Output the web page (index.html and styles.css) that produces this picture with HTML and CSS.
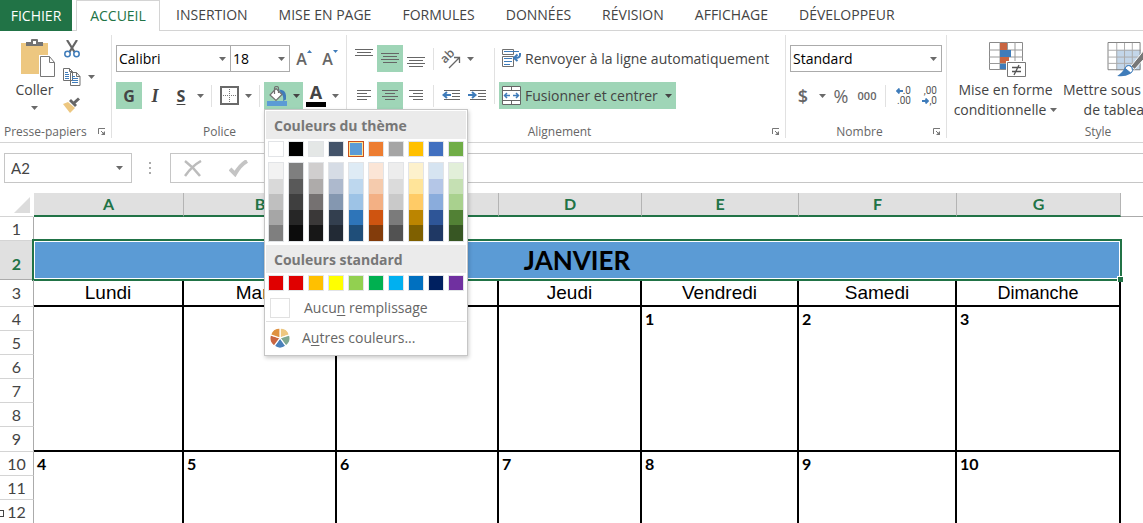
FILE: index.html
```html
<!DOCTYPE html>
<html lang="fr">
<head>
<meta charset="utf-8">
<title>Calendrier</title>
<link rel="stylesheet" href="styles.css">
</head>
<body>
<svg class="defs" aria-hidden="true">
  <symbol id="arrow" viewBox="0 0 7 4"><path d="M0 0h7L3.5 4z" fill="currentColor"/></symbol>
  <symbol id="launch" viewBox="0 0 8 8"><path d="M.5 6V.5H7M3 3l3 3" fill="none" stroke="#777"/><path d="M7 3v4H3z" fill="#777"/></symbol>
</svg>

<nav class="tabs">
  <button class="tab file">FICHIER</button>
  <button class="tab active">ACCUEIL</button>
  <button class="tab">INSERTION</button>
  <button class="tab">MISE EN PAGE</button>
  <button class="tab">FORMULES</button>
  <button class="tab">DONNÉES</button>
  <button class="tab">RÉVISION</button>
  <button class="tab">AFFICHAGE</button>
  <button class="tab">DÉVELOPPEUR</button>
</nav>

<div class="ribbon">
  <section class="group clipboard">
    <div class="clip-body">
      <button class="big paste">
        <svg width="34" height="38" viewBox="0 0 34 38"><path d="M0 4h27v31H0z" fill="#edc780"/><path d="M5 7V3h5V1q0-1 1-1h5q1 0 1 1v2h5v4z" fill="#737373"/><path d="M12 2h3v3h-3z" fill="#fff"/><path d="M18 16h11l6 6v16H18z" fill="#fff"/><path d="M19.500 17.500h9l5 6v14h-14z" fill="#fff" stroke="#777"/><path d="M28.500 17.500v6h5" fill="none" stroke="#777"/></svg>
        <span>Coller</span>
        <svg class="arrow"><use href="#arrow"/></svg>
      </button>
      <div class="clip-tools">
        <button class="tool" aria-label="Couper"><svg width="16" height="18" viewBox="0 0 16 18"><path d="M3 0l7.500 12M13 0L5.500 12" stroke="#666" stroke-width="2.200"/><circle cx="3.500" cy="14" r="2.700" fill="#fff" stroke="#3f7cba" stroke-width="1.500"/><circle cx="12.500" cy="14" r="2.700" fill="#fff" stroke="#3f7cba" stroke-width="1.500"/></svg></button>
        <div class="row"><button class="tool" aria-label="Copier"><svg width="18" height="18" viewBox="0 0 18 18"><path d="M.5.5h6l3 3v9h-9zM7.500 4.500h6l3.500 4v9H7.500z" fill="#fff" stroke="#707070"/><path d="M6.500.5v3h3M13.500 4.500v4H17" fill="none" stroke="#707070"/><path d="M2 4.500h3M2 6.500h4M2 8.500h4M2 10.500h4M9 8.500h3M9 10.500h6M9 12.500h6M9 14.500h6" stroke="#3f7cba"/></svg></button><button class="drop" aria-label="Options de copie"><svg class="arrow"><use href="#arrow"/></svg></button></div>
        <button class="tool" aria-label="Reproduire la mise en forme"><svg width="18" height="16" viewBox="0 0 18 16"><path d="M0 7l5-2 7 6-5 5z" fill="#edc780"/><path d="M6 4l6 6 2-2-6-6z" fill="#666"/><path d="M11 6L16 1.500" stroke="#666" stroke-width="3"/></svg></button>
      </div>
    </div>
    <footer class="caption"><span>Presse-papiers</span><button class="launcher" aria-label="Presse-papiers, options"><svg width="8" height="8"><use href="#launch"/></svg></button></footer>
  </section>

  <section class="group font">
    <div class="rows">
      <div class="row">
        <label class="combo family"><select aria-label="Police"><option>Calibri</option></select><svg class="arrow"><use href="#arrow"/></svg></label>
        <label class="combo size"><select aria-label="Taille"><option>18</option></select><svg class="arrow"><use href="#arrow"/></svg></label>
        <button class="tool grow" aria-label="Augmenter la taille"><span>A</span><svg width="5" height="3" viewBox="0 0 5 3"><path d="M0 3h5L2.500 0z" fill="#3f7cba"/></svg></button>
        <button class="tool shrink" aria-label="Réduire la taille"><span>A</span><svg width="5" height="3" viewBox="0 0 5 3"><path d="M0 0h5L2.500 3z" fill="#3f7cba"/></svg></button>
      </div>
      <div class="row">
        <button class="tool letter on">G</button>
        <button class="tool letter italic">I</button>
        <button class="tool letter underline">S</button>
        <button class="drop" aria-label="Soulignement"><svg class="arrow"><use href="#arrow"/></svg></button>
        <i class="sep"></i>
        <button class="tool" aria-label="Bordures"><svg width="19" height="19" viewBox="0 0 19 19"><path d="M1 1h17v17H1z" fill="#fff" stroke="#6a6a6a" stroke-width="2"/><path d="M9.500 3v13M3 9.500h13" stroke="#777" stroke-dasharray="1 1"/></svg></button>
        <button class="drop" aria-label="Options de bordure"><svg class="arrow"><use href="#arrow"/></svg></button>
        <i class="sep"></i>
        <div class="fill">
          <button class="tool on" aria-label="Couleur de remplissage"><svg width="20" height="20" viewBox="0 0 20 20"><path d="M12 3.500q6.500 0 7 6v4l-3 1.500q1-5-2-8z" fill="#3f7cba"/><path d="M9 2.500l6 6L9 14.500 3 9z" fill="#fff" stroke="#707070" stroke-width="1.200"/><path d="M7.500 8V2q0-1.500 2-1.500t2 1.500v5" fill="none" stroke="#707070" stroke-width="1.200"/><path d="M0 15h20v5H0z" fill="#5b9bd5"/></svg></button><button class="drop wide on" aria-label="Choisir la couleur de remplissage"><svg class="arrow"><use href="#arrow"/></svg></button>
          <div class="menu">
            <h2>Couleurs du thème</h2>
            <div class="swatches theme">
              <button class="c-fff"></button><button class="c-000"></button><button class="c-e7e6e6"></button><button class="c-44546a"></button><button class="c-5b9bd5 chosen"></button><button class="c-ed7d31"></button><button class="c-a5a5a5"></button><button class="c-ffc000"></button><button class="c-4472c4"></button><button class="c-70ad47"></button>
            </div>
            <div class="shades">
              <button class="s1"></button><button class="s2"></button><button class="s3"></button><button class="s4"></button><button class="s5"></button><button class="s6"></button><button class="s7"></button><button class="s8"></button><button class="s9"></button><button class="s10"></button>
            </div>
            <h2>Couleurs standard</h2>
            <div class="swatches">
              <button class="c-red"></button><button class="c-red"></button><button class="c-ffc000"></button><button class="c-yellow"></button><button class="c-lime"></button><button class="c-green"></button><button class="c-sky"></button><button class="c-blue"></button><button class="c-navy"></button><button class="c-purple"></button>
            </div>
            <button class="item none"><i class="blank"></i><span>Aucu<u>n</u> remplissage</span></button>
            <button class="item more"><svg width="20" height="20" viewBox="-10 -10 20 20"><g stroke="#fff" stroke-width="1.200"><path d="M0 0V-10A10 10 0 0 1 9.500-3.100z" fill="#edc780"/><path d="M0 0L9.500-3.100A10 10 0 0 1 5.900 8.100z" fill="#7fa890"/><path d="M0 0L5.900 8.100A10 10 0 0 1-5.900 8.100z" fill="#4a80ba"/><path d="M0 0L-5.900 8.100A10 10 0 0 1-9.500-3.100z" fill="#c96541"/><path d="M0 0L-9.500-3.100A10 10 0 0 1 0-10z" fill="#df9140"/></g></svg><span>A<u>u</u>tres couleurs...</span></button>
          </div>
        </div>
        <button class="tool color" aria-label="Couleur de police"><span>A</span><i></i></button>
        <button class="drop" aria-label="Choisir la couleur de police"><svg class="arrow"><use href="#arrow"/></svg></button>
      </div>
    </div>
    <footer class="caption"><span>Police</span><button class="launcher" aria-label="Police, options"><svg width="8" height="8"><use href="#launch"/></svg></button></footer>
  </section>

  <section class="group align">
    <div class="align-body">
      <div class="rows">
        <div class="row">
          <button class="tool high" aria-label="Aligner en haut"><svg width="18" height="8" viewBox="0 0 18 8"><path d="M0 .5h18M2 3.500h14M0 6.500h18" stroke="#666"/></svg></button>
          <button class="tool on" aria-label="Aligner au centre"><svg width="18" height="11" viewBox="0 0 18 11"><path d="M0 .5h18M2 3.500h14M0 6.500h18M2 9.500h14" stroke="#666"/></svg></button>
          <button class="tool low" aria-label="Aligner en bas"><svg width="18" height="11" viewBox="0 0 18 11"><path d="M0 .5h18M2 3.500h14M0 6.500h18M2 9.500h14" stroke="#666"/></svg></button>
          <i class="sep"></i>
          <button class="tool" aria-label="Orientation"><svg class="orient" width="20" height="20" viewBox="0 0 20 20"><text x="4" y="15" transform="rotate(-45 4 15)">ab</text><path d="M8 19L18 9M13 8.500h5.500V14" fill="none" stroke="#666" stroke-width="1.300"/></svg></button>
          <button class="drop" aria-label="Options d’orientation"><svg class="arrow"><use href="#arrow"/></svg></button>
        </div>
        <div class="row">
          <button class="tool" aria-label="Gauche"><svg width="14" height="11" viewBox="0 0 14 11"><path d="M0 .5h14M0 3.500h10M0 6.500h14M0 9.500h10" stroke="#666"/></svg></button>
          <button class="tool on" aria-label="Centre"><svg width="16" height="11" viewBox="0 0 16 11"><path d="M0 .5h16M3 3.500h10M0 6.500h16M3 9.500h10" stroke="#666"/></svg></button>
          <button class="tool" aria-label="Droite"><svg width="14" height="11" viewBox="0 0 14 11"><path d="M0 .5h14M4 3.500h10M0 6.500h14M4 9.500h10" stroke="#666"/></svg></button>
          <i class="sep"></i>
          <button class="tool" aria-label="Diminuer le retrait"><svg width="18" height="11" viewBox="0 0 18 11"><path d="M2 .5h16M10 3.500h8M10 6.500h8M2 9.500h16" stroke="#666"/><path d="M9 5H2M5 2L1.500 5 5 8" fill="none" stroke="#3f7cba" stroke-width="2"/></svg></button>
          <button class="tool" aria-label="Augmenter le retrait"><svg width="18" height="11" viewBox="0 0 18 11"><path d="M2 .5h16M10 3.500h8M10 6.500h8M2 9.500h16" stroke="#666"/><path d="M0 5h7M4 2l3.500 3L4 8" fill="none" stroke="#3f7cba" stroke-width="2"/></svg></button>
        </div>
      </div>
      <i class="sep tall"></i>
      <div class="rows">
        <button class="wide-btn"><svg width="19" height="19" viewBox="0 0 19 19"><path d="M.5.5h11v5H.5zM.5 7.500h11v10H.5z" fill="#fff" stroke="#707070"/><path d="M2 2.500h15M2 9.500h8M2 12.500h8M2 15.500h6" stroke="#3f7cba"/><path d="M18 4v2q0 3-5 3M15.500 5.500L12 9l3.500 3" fill="none" stroke="#3f7cba" stroke-width="2"/></svg><span>Renvoyer à la ligne automatiquement</span></button>
        <button class="wide-btn on"><svg width="19" height="19" viewBox="0 0 19 19"><path d="M.5.5h18v18H.5zM.5 4.500h18M.5 14.500h18M9.500.5v4M9.500 14.500v4" fill="#fff" stroke="#666"/><path d="M3 9.500h5M11 9.500h5M5 7L2.500 9.500 5 12M14 7l2.500 2.500L14 12" fill="none" stroke="#3f7cba" stroke-width="1.500"/></svg><span>Fusionner et centrer</span><svg class="arrow"><use href="#arrow"/></svg></button>
      </div>
    </div>
    <footer class="caption"><span>Alignement</span><button class="launcher" aria-label="Alignement, options"><svg width="8" height="8"><use href="#launch"/></svg></button></footer>
  </section>

  <section class="group number">
    <div class="rows">
      <div class="row"><label class="combo format"><select aria-label="Format de nombre"><option>Standard</option></select><svg class="arrow"><use href="#arrow"/></svg></label></div>
      <div class="row">
        <button class="tool sign dollar">$</button>
        <button class="drop" aria-label="Devise"><svg class="arrow"><use href="#arrow"/></svg></button>
        <button class="tool sign">%</button>
        <button class="tool zeros">000</button>
        <i class="sep"></i>
        <button class="tool decimals"><span><svg width="7" height="6" viewBox="0 0 7 6"><path d="M7 3H1M3.500 .5L1 3l2.500 2.500" fill="none" stroke="#3f7cba" stroke-width="1.800"/></svg>.0</span><span>.00</span></button>
        <button class="tool decimals"><span>,00</span><span><svg width="7" height="6" viewBox="0 0 7 6"><path d="M0 3h6M3.500 .5L6 3 3.500 5.500" fill="none" stroke="#3f7cba" stroke-width="1.800"/></svg>,0</span></button>
      </div>
    </div>
    <footer class="caption"><span>Nombre</span><button class="launcher" aria-label="Nombre, options"><svg width="8" height="8"><use href="#launch"/></svg></button></footer>
  </section>

  <section class="group style">
    <div class="style-body">
      <button class="big">
        <svg width="37" height="35" viewBox="0 0 37 35"><path d="M.5.5h33v27H.5z" fill="#fff" stroke="#8a8a8a"/><path d="M0 8h34M0 15h34M0 21.500h34M11 0v28M18.500 0v28M26 0v28" stroke="#999"/><path d="M11 1h7v7h-7zM11 15h9v6h-9z" fill="#c96541"/><path d="M11 8h11v7H11zM11 22h6v5h-6z" fill="#3f7cba"/><path d="M17 19h20v16H17z" fill="#fff"/><path d="M18.500 20.500h18v14h-18z" fill="#fff" stroke="#777"/><path d="M23 25.500h9M23 29.500h9M30 23l-5 10" stroke="#555" stroke-width="1.300"/></svg>
        <span>Mise en forme</span><span>conditionnelle <svg class="arrow"><use href="#arrow"/></svg></span>
      </button>
      <button class="big">
        <svg width="37" height="36" viewBox="0 0 37 36"><path d="M1 1h33v28H1z" fill="#fff"/><path d="M9 8h25v21H9z" fill="#c3d6e9"/><path d="M1 8.500h33M1 15.500h33M1 22h33M9.500 1v28M17.500 1v28M25.500 1v28" stroke="#aaa"/><path d="M.5.500h33v28H.5z" fill="none" stroke="#808080"/><path d="M24 25L37 9v9l-9 10z" fill="#777" stroke="#fff"/><path d="M10 35q6-4 8-9 3-4 7-1 3 5-2 8-5 3-13 2z" fill="#3f7cba"/><path d="M18 27q3-5 7-1 2 4-1 6z" fill="#fff" stroke="#3f7cba"/></svg>
        <span>Mettre sous forme</span><span>de tableau <svg class="arrow"><use href="#arrow"/></svg></span>
      </button>
    </div>
    <footer class="caption"><span>Style</span></footer>
  </section>
</div>

<div class="formula">
  <label class="name-box"><input value="A2" aria-label="Zone Nom"><svg class="arrow"><use href="#arrow"/></svg></label>
  <svg class="dots" width="3" height="13" viewBox="0 0 3 13"><path d="M0 0h2v2H0zM0 5h2v2H0zM0 10h2v2H0z" fill="#aaa"/></svg>
  <div class="edit">
    <button aria-label="Annuler"><svg width="18" height="17" viewBox="0 0 18 17"><path d="M1 1q8 6 15 15M17 1Q8 6 1 16" fill="none" stroke="#bcbcbc" stroke-width="2.500"/></svg></button>
    <button aria-label="Entrer"><svg width="19" height="17" viewBox="0 0 19 17"><path d="M1 9l5 5Q11 5 18 1" fill="none" stroke="#c4c4c4" stroke-width="4"/></svg></button>
    <input aria-label="Barre de formule">
  </div>
</div>

<div class="sheet">
  <table>
    <colgroup><col class="w-head"><col class="w-a"><col class="w-b"><col class="w-c"><col class="w-d"><col class="w-e"><col class="w-f"><col class="w-g"><col></colgroup>
    <thead><tr><th class="corner"><svg width="16" height="16" viewBox="0 0 16 16"><path d="M16 0v16H0z" fill="#dcdcdc"/></svg></th><th>A</th><th>B</th><th>C</th><th>D</th><th>E</th><th>F</th><th>G</th><th class="rest"></th></tr></thead>
    <tbody>
      <tr><th>1</th><td colspan="7"></td><td></td></tr>
      <tr class="title"><th>2</th><td colspan="7"><div class="selection">JANVIER<i class="handle"></i></div></td><td></td></tr>
      <tr class="days"><th>3</th><td>Lundi</td><td>Mardi</td><td>Mercredi</td><td>Jeudi</td><td>Vendredi</td><td>Samedi</td><td class="small">Dimanche</td><td></td></tr>
      <tr class="week"><th>4</th><td></td><td></td><td></td><td></td><td>1</td><td>2</td><td>3</td><td></td></tr>
      <tr class="week"><th>5</th><td></td><td></td><td></td><td></td><td></td><td></td><td></td><td></td></tr>
      <tr class="week"><th>6</th><td></td><td></td><td></td><td></td><td></td><td></td><td></td><td></td></tr>
      <tr class="week"><th>7</th><td></td><td></td><td></td><td></td><td></td><td></td><td></td><td></td></tr>
      <tr class="week"><th>8</th><td></td><td></td><td></td><td></td><td></td><td></td><td></td><td></td></tr>
      <tr class="week last"><th>9</th><td></td><td></td><td></td><td></td><td></td><td></td><td></td><td></td></tr>
      <tr class="week"><th>10</th><td>4</td><td>5</td><td>6</td><td>7</td><td>8</td><td>9</td><td>10</td><td></td></tr>
      <tr class="week"><th>11</th><td></td><td></td><td></td><td></td><td></td><td></td><td></td><td></td></tr>
      <tr class="week"><th class="marked">12</th><td></td><td></td><td></td><td></td><td></td><td></td><td></td><td></td></tr>
    </tbody>
  </table>
</div>
</body>
</html>
```

FILE: styles.css
```css
* { box-sizing: border-box; }
html, body { height: 100%; }
body {
  margin: 0;
  overflow: hidden;
  background: #fff;
  color: #444;
  font: 14px/20px "Open Sans", "Noto Sans", sans-serif;
}
button, input, select {
  margin: 0;
  padding: 0;
  border: 0;
  border-radius: 0;
  background: none;
  color: inherit;
  font: inherit;
}
svg { display: block; flex: none; }
.defs { position: absolute; width: 0; height: 0; }
.arrow { width: 7px; height: 4px; color: #6a6a6a; }

/* Tabs */
.tabs {
  display: flex;
  height: 31px;
  border-bottom: 1px solid #d4d4d4;
  white-space: nowrap;
}
.tab { flex: none; height: 30px; margin-right: 31px; }
.tab.file { width: 72px; height: 31px; margin-right: 4px; background: #217346; color: #fff; }
.tab.active {
  width: 84px;
  height: 31px;
  margin-right: 16px;
  border: 1px solid #d4d4d4;
  border-bottom: 0;
  background: #fff;
  color: #217346;
}

/* Ribbon */
.ribbon {
  display: flex;
  height: 112px;
  overflow-x: clip;
  border-bottom: 1px solid #d4d4d4;
  white-space: nowrap;
}
.group {
  display: flex;
  flex: none;
  flex-direction: column;
  justify-content: space-between;
  margin: 4px 0;
  border-right: 1px solid #e1e1e1;
}
.caption {
  display: flex;
  align-items: center;
  height: 12px;
  padding-right: 5px;
  color: #666;
  font-size: 12px;
}
.caption span { flex: 1; text-align: center; }
.launcher { flex: none; }
.rows { display: flex; flex-direction: column; gap: 10px; }
.row { display: flex; height: 27px; }
.tool, .drop {
  display: flex;
  flex: none;
  align-items: center;
  justify-content: center;
  width: 26px;
  height: 27px;
}
.drop { width: 12px; }
.drop.wide { width: 13px; }
.on { background: #9fd5b7; }
.on .arrow { color: #444; }
.sep { width: 1px; height: 22px; margin: 3px 4px 0 5px; background: #e1e1e1; }

.clipboard { width: 112px; }
.clip-body { display: flex; padding-left: 10px; }
.clip-tools { display: flex; flex-direction: column; }
.clip-tools .tool, .clip-tools .drop, .clip-tools .row { height: 28px; }
.clipboard .caption span { text-align: left; padding-left: 4px; }
.big { display: flex; flex-direction: column; align-items: center; }
.big span { display: flex; align-items: center; gap: 4px; }
.paste { width: 49px; padding: 4px 0 0; }
.paste span { margin: 3px 0 6px; }
.paste > svg:first-child { margin-left: 6px; }

.font, .align, .number { padding: 10px 0 0 4px; }
.font .caption, .align .caption, .number .caption { margin-left: -4px; }
.font { width: 235px; }
.font .caption { padding-right: 11px; }
.combo { display: flex; position: relative; align-items: center; height: 27px; border: 1px solid #ababab; }
.combo select {
  width: 100%;
  height: 25px;
  padding-left: 2px;
  appearance: none;
  color: #000;
}
.combo .arrow { position: absolute; right: 4px; pointer-events: none; }
.family { width: 115px; }
.size { width: 60px; margin: 0 1px 0 -1px; }
.grow, .shrink { align-items: center; font-size: 16px; font-weight: 600; color: #666; }
.grow svg, .shrink svg { margin-bottom: 14px; }
.letter { font-size: 16px; font-weight: 700; }
.italic { font-family: "Liberation Serif", serif; font-style: italic; font-size: 18px; }
.underline { text-decoration: underline; text-underline-offset: 2px; }
.color { flex-direction: column; justify-content: flex-start; font-size: 18px; font-weight: 700; }
.color i { width: 20px; height: 5px; background: #000; }
.fill { display: flex; position: relative; }

/* Colour menu */
.menu {
  position: absolute;
  z-index: 5;
  top: 100%;
  left: 0;
  width: 204px;
  padding: 1px;
  border: 1px solid #c6c6c6;
  background: #fff;
  box-shadow: 1px 2px 4px rgba(0, 0, 0, .2);
  color: #666;
}
.menu h2 {
  height: 28px;
  margin: 0;
  padding-left: 8px;
  background: #ebebeb;
  color: #777;
  font-size: 14px;
  line-height: 29px;
}
.swatches, .shades { display: flex; gap: 4px; padding: 2px; }
.swatches button, .shades button { flex: none; width: 16px; height: 16px; border: 1px solid #e2e4e7; }
.shades { padding: 3px 2px; }
.shades button {
  height: 80px;
  background: linear-gradient(var(--a) 20%, var(--b) 20% 40%, var(--c) 40% 60%, var(--d) 60% 80%, var(--e) 80%);
}
.swatches .chosen { border-color: #c8501e; box-shadow: inset 0 0 0 1px #ffe294; }
.c-fff { background: #fff; }
.c-000 { background: #000; }
.c-e7e6e6 { background: #e4e7e6; }
.c-44546a { background: #44546a; }
.c-5b9bd5 { background: #5b9bd5; }
.c-ed7d31 { background: #ed7d31; }
.c-a5a5a5 { background: #a5a5a5; }
.c-ffc000 { background: #ffc000; }
.c-4472c4 { background: #4170c0; }
.c-70ad47 { background: #70ad47; }
.c-red { background: #e00000; }
.c-yellow { background: #ff0; }
.c-lime { background: #92d050; }
.c-green { background: #00b050; }
.c-sky { background: #00b0f0; }
.c-blue { background: #0070c0; }
.c-navy { background: #002060; }
.c-purple { background: #7030a0; }
.s1 { --a: #f2f2f2; --b: #d9d9d9; --c: #bfbfbf; --d: #a6a6a6; --e: #7f7f7f; }
.s2 { --a: #7f7f7f; --b: #595959; --c: #3f3f3f; --d: #262626; --e: #0c0c0c; }
.s3 { --a: #d0cece; --b: #aeabaa; --c: #757171; --d: #3a3838; --e: #171717; }
.s4 { --a: #d6dce5; --b: #adb9cd; --c: #8497b0; --d: #333f4f; --e: #222a35; }
.s5 { --a: #deebf5; --b: #bdd7ee; --c: #9dc3e6; --d: #2e75b9; --e: #1f4e79; }
.s6 { --a: #fbe5d6; --b: #f5cbad; --c: #f3b084; --d: #cf5410; --e: #833c0b; }
.s7 { --a: #ededed; --b: #dbdbdb; --c: #c9c9c9; --d: #7b7b7b; --e: #525252; }
.s8 { --a: #fdf1cc; --b: #ffe499; --c: #ffcb66; --d: #bc8500; --e: #7f6000; }
.s9 { --a: #d6e4f1; --b: #b4c6e7; --c: #8aacdc; --d: #2e5597; --e: #1f3864; }
.s10 { --a: #e2efd9; --b: #c5e0b3; --c: #a9d18e; --d: #528135; --e: #375623; }
.item { display: flex; align-items: center; width: 100%; text-align: left; }
.item u { text-underline-offset: 2px; }
.none { height: 29px; gap: 14px; padding: 1px 0 0 4px; border-bottom: 1px solid #e1e1e1; }
.more { height: 32px; gap: 12px; padding-left: 4px; }
.blank { width: 20px; height: 20px; border: 1px solid #e1e1e1; }

.align { width: 439px; }
.align-body { display: flex; }
.align .sep { margin: 3px 4px 0; }
.align .sep.tall { height: 56px; }
.high svg { margin-bottom: 11px; }
.low svg { margin-top: 7px; }
.orient { overflow: visible; font: 600 12px/12px "Open Sans", sans-serif; fill: #666; }
.wide-btn { display: flex; align-items: center; gap: 4px; height: 27px; padding: 0 4px 0 3px; }
.wide-btn .arrow { margin-left: 3px; }
.wide-btn.on { align-self: flex-start; }

.number { width: 161px; }
.format { width: 152px; }
.sign { font-size: 18px; color: #666; }
.dollar { font-weight: 600; }
.zeros { font-size: 11px; font-weight: 600; color: #666; }
.decimals { flex-direction: column; align-items: flex-end; padding-right: 5px; color: #555; font: 10px/10px Roboto, sans-serif; }
.decimals span { display: flex; align-items: center; }

.style { width: 308px; }
.style-body { display: flex; gap: 4px; padding-left: 5px; }
.style .big { min-width: 107px; padding-top: 7px; }
.style .big > svg { margin: 0 0 3px 4px; height: 35px; }

/* Formula bar */
.formula { display: flex; align-items: center; padding: 10px 0 10px 4px; }
.name-box { display: flex; align-items: center; width: 128px; height: 30px; padding: 0 8px 0 6px; border: 1px solid #c6c6c6; }
.name-box input { flex: 1; min-width: 0; font-family: Lato, sans-serif; font-size: 15px; }
.dots { margin: 0 18px 0 17px; }
.edit { display: flex; flex: 1; align-items: center; height: 30px; padding-left: 13px; gap: 27px; border: 1px solid #c6c6c6; border-right: 0; }
.edit input { flex: 1; min-width: 0; }

/* Sheet */
.sheet { overflow: hidden; }
table { width: 100%; table-layout: fixed; border-collapse: separate; border-spacing: 0; }
.w-head { width: 34px; }
.w-a { width: 150px; }
.w-b { width: 153px; }
.w-c { width: 162px; }
.w-d { width: 143px; }
.w-e { width: 157px; }
.w-f { width: 158px; }
.w-g { width: 164px; }
th, td { height: 24px; padding: 0; }
thead th {
  border-right: 1px solid #b4b4b4;
  border-bottom: 2px solid #217346;
  background: #e0e0e0;
  color: #217346;
  font: 700 16px/20px Lato, sans-serif;
}
thead .corner { border-right-color: #fff; border-bottom: 1px solid #d4d4d4; background: #fff; }
.corner svg { margin-left: 14px; }
thead .rest { border-right: 0; border-bottom: 1px solid #ababab; background: #fff; }
tbody th {
  position: relative;
  border-right: 1px solid #ababab;
  border-bottom: 1px solid #d4d4d4;
  font: 400 16px/20px Lato, sans-serif;
}
.title th, .title td { height: 39px; }
.title th { padding-top: 7px; border-bottom-color: #ababab; background: #e0e0e0; color: #217346; font-weight: 700; }
.title td { position: relative; }
.selection {
  display: flex;
  position: absolute;
  inset: -2px -1px -1px -2px;
  align-items: center;
  justify-content: center;
  border: 2px solid #217346;
  background: #5b9bd5;
  box-shadow: inset 0 0 0 1px #fff;
  color: #000;
  font: 700 26px/34px Lato, sans-serif;
}
.handle { position: absolute; right: -3px; bottom: -3px; width: 6px; height: 6px; border: 1px solid #fff; border-width: 1px 0 0 1px; background: #217346; }
.days th, .days td { height: 27px; }
.days td { border-bottom: 2px solid #000; color: #000; text-align: center; font: 19px/22px "Liberation Sans", Arial, sans-serif; }
.days td.small { font-size: 18px; }
.days td:not(:last-child), .week td:not(:last-child) { border-right: 2px solid #000; }
.days td:last-child { border-bottom: 0; }
.week td { padding-left: 3px; color: #000; font: 700 16px/20px Lato, sans-serif; }
.last th, .last td { height: 25px; }
.last td:not(:last-child) { border-bottom: 2px solid #000; }
.marked::before { content: ""; position: absolute; left: -2px; top: 10px; width: 4px; height: 5px; border: 1px solid #444; }
```
